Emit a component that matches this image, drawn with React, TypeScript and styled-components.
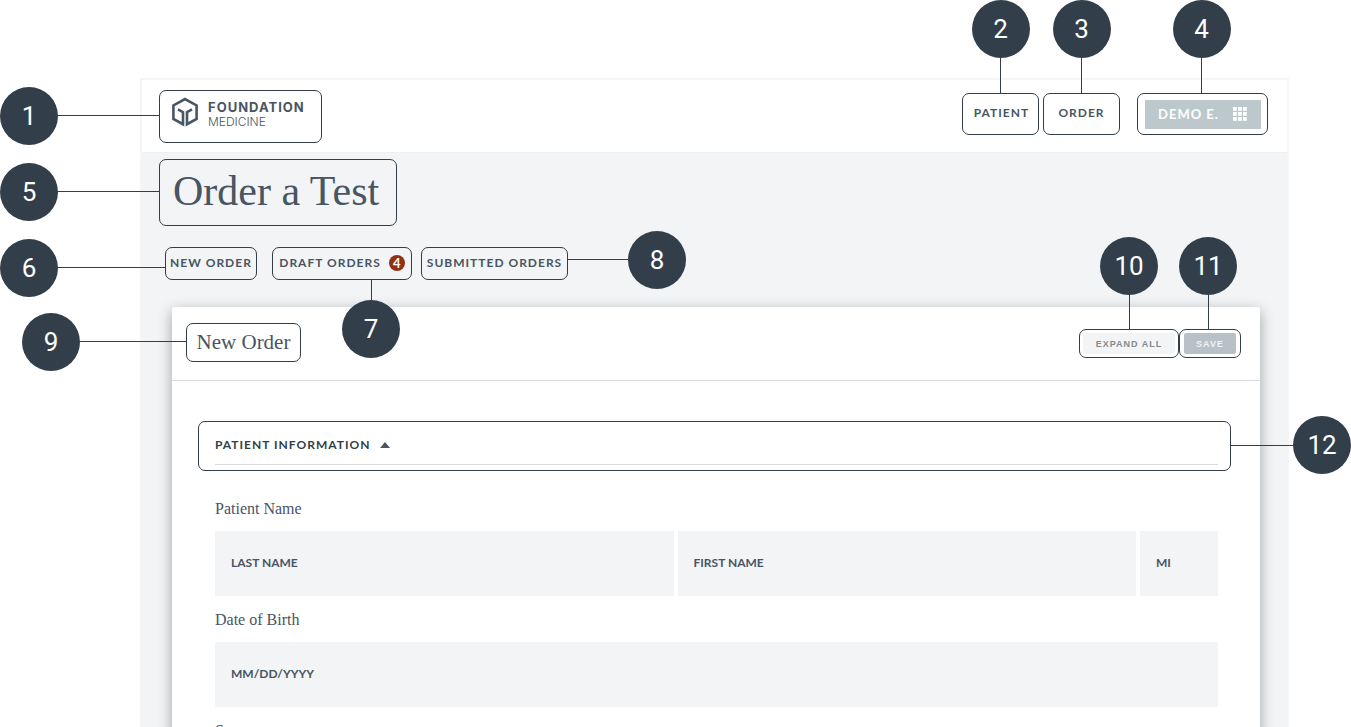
import React from 'react';
import styled, { createGlobalStyle, css } from 'styled-components';

const ink = '#323e4a';
const slate = '#485563';
const mist = '#f2f4f6';
const sans = "Lato, 'Open Sans', sans-serif";
const serif = "'Liberation Serif', serif";

const GlobalStyle = createGlobalStyle`
  *, *::before, *::after { box-sizing: border-box; }
  body { margin: 0; background: #fff; color: ${slate}; font-family: ${sans}; }
  h1, h2, h3 { margin: 0; font-weight: 400; }
  button { border: 0; margin: 0; padding: 0; cursor: pointer; }
  a { color: inherit; text-decoration: none; }
`;

const Page = styled.div`
  display: flex;
  height: 100vh;
  overflow: hidden;
  padding: 78px 62px 0 140px;
`;

const Frame = styled.div`
  flex: 1;
  min-width: 0;
  display: flex;
  flex-direction: column;
  border: 2px solid #f4f5f6;
  border-bottom: 0;
`;

/* Outlined area that carries a numbered marker */
const Outline = styled.div<{ $w?: number; $h: number; $align?: string; $pad?: string }>`
  position: relative;
  flex: none;
  display: flex;
  align-items: center;
  justify-content: ${p => p.$align ?? 'center'};
  width: ${p => (p.$w ? `${p.$w}px` : 'auto')};
  height: ${p => p.$h}px;
  padding: ${p => p.$pad ?? '0'};
  border: 1px solid ${ink};
  border-radius: 7px;
`;

type Side = 'left' | 'right' | 'top' | 'bottom';

const sides = {
  left: css`right: 100%; top: 50%; flex-direction: row;`,
  right: css`left: 100%; top: 50%; flex-direction: row-reverse;`,
  top: css`bottom: 100%; left: 50%; flex-direction: column;`,
  bottom: css`top: 100%; left: 50%; flex-direction: column-reverse;`,
};

const MarkerBox = styled.div<{ $side: Side; $shift: number }>`
  position: absolute;
  z-index: 2;
  display: flex;
  align-items: center;
  ${p => sides[p.$side]}
  ${p => (p.$side === 'left' || p.$side === 'right'
    ? css`margin-top: ${p.$shift - 30}px;`
    : css`margin-left: ${p.$shift - 29}px;`)}
`;

const Disc = styled.span`
  flex: none;
  width: 58px;
  height: 58px;
  border-radius: 50%;
  background: ${ink};
  color: #fff;
  font: 400 26px/58px Roboto, sans-serif;
  text-align: center;
`;

const Lead = styled.span<{ $side: Side; $length: number }>`
  flex: none;
  background: ${ink};
  ${p => (p.$side === 'left' || p.$side === 'right'
    ? css`width: ${p.$length}px; height: 1px;`
    : css`width: 1px; height: ${p.$length}px;`)}
`;

function Marker({ n, side, length, shift = 0 }: { n: number; side: Side; length: number; shift?: number }) {
  return (
    <MarkerBox $side={side} $shift={shift}>
      <Disc>{n}</Disc>
      <Lead $side={side} $length={length} />
    </MarkerBox>
  );
}

const Header = styled.header`
  flex: none;
  display: flex;
  justify-content: space-between;
  align-items: flex-start;
  height: 73px;
  padding: 10px 19px 0 17px;
  background: #fff;
  border-bottom: 1px solid #eeeff0;
`;

const Brand = styled.a`
  display: flex;
  align-items: flex-start;
  gap: 9px;
  padding-bottom: 9px;
`;

const BrandText = styled.span`
  display: flex;
  flex-direction: column;
  padding-top: 3px;
`;

const BrandName = styled.span`
  font: 700 13px/15px Inter, sans-serif;
  letter-spacing: 1px;
`;

const BrandSub = styled.span`
  font: 300 12px/13px Inter, sans-serif;
`;

const Nav = styled.nav`
  display: flex;
  gap: 4px;
  margin-top: 3px;
`;

const Account = styled.div`
  margin-left: 13px;
`;

const TextLink = styled.a`
  font: 700 12px/20px ${sans};
  letter-spacing: 1px;
  white-space: nowrap;
`;

const AccountButton = styled.button`
  display: flex;
  align-items: center;
  justify-content: center;
  gap: 14px;
  width: 116px;
  height: 29px;
  background: #bdc8cd;
  color: #fff;
  font: 700 13px/20px ${sans};
  letter-spacing: 1px;
`;

const Main = styled.main`
  flex: 1;
  display: flex;
  flex-direction: column;
  align-items: flex-start;
  padding: 6px 27px 0 30px;
  background: ${mist};
`;

const TitleRow = styled.div`
  margin-left: -13px;
`;

const Title = styled.h1`
  font: 400 42px/50px ${serif};
`;

const Tabs = styled.nav`
  display: flex;
  margin: 21px 0 27px -7px;
`;

const TabGap = styled.div<{ $before: number }>`
  margin-left: ${p => p.$before}px;
`;

const Count = styled.span`
  width: 16px;
  height: 16px;
  margin-left: 8px;
  border-radius: 50%;
  background: #8f3212;
  color: #fff;
  font: 700 13px/16px ${sans};
  text-align: center;
`;

const Card = styled.section`
  align-self: stretch;
  flex: 1;
  background: #fff;
  border-radius: 2px 2px 0 0;
  box-shadow: 0 4px 14px rgba(40, 46, 44, 0.4);
`;

const CardHeader = styled.div`
  display: flex;
  justify-content: space-between;
  align-items: flex-start;
  height: 74px;
  padding: 16px 19px 0 14px;
  border-bottom: 1px solid #dcdedf;
`;

const CardTitle = styled.h2`
  font: 400 21px/26px ${serif};
`;

const Actions = styled.div`
  display: flex;
  margin-top: 6px;
`;

const SmallButton = styled.button<{ $solid?: boolean }>`
  width: ${p => (p.$solid ? 52 : 92)}px;
  height: 21px;
  border-radius: 2px;
  background: ${p => (p.$solid ? '#b9c1c8' : mist)};
  color: ${p => (p.$solid ? '#f0f2f4' : '#85898d')};
  font: 700 9px/20px 'Liberation Sans', sans-serif;
  letter-spacing: 1px;
`;

const SectionArea = styled.div`
  padding: 40px 29px 0 26px;
`;

const SectionToggle = styled.button`
  align-self: flex-start;
  display: flex;
  flex: 1;
  align-items: center;
  gap: 10px;
  height: 43px;
  padding-top: 3px;
  border-bottom: 1px solid #d9dcde;
  background: none;
  color: ${ink};
  font: 700 12px/20px ${sans};
  letter-spacing: 1px;
`;

const Form = styled.form`
  display: flex;
  flex-direction: column;
  gap: 14px;
  padding: 28px 42px 0 43px;
`;

const Group = styled.div`
  display: flex;
  flex-direction: column;
  gap: 12px;
`;

const Label = styled.label`
  font: 400 16px/20px ${serif};
`;

const NameRow = styled.div`
  display: grid;
  grid-template-columns: 1fr 1fr 78px;
  gap: 4px;
`;

const Field = styled.input`
  width: 100%;
  min-width: 0;
  height: 65px;
  padding: 0 16px 2px;
  border: 0;
  border-radius: 0;
  background: ${mist};
  color: ${slate};
  font: 700 12px/20px ${sans};
  &::placeholder { color: ${slate}; opacity: 1; }
`;

function BrandMark() {
  return (
    <svg width="28" height="31" viewBox="0 0 28 31" fill="none" stroke={slate} strokeWidth="2.6" aria-hidden="true">
      <path d="M7 12.4L12 15.2V27.2L2.4 22V8.4L14 2L25.6 8.4V22L16 27.2V15.2L21 12.4" />
    </svg>
  );
}

function GridIcon() {
  const steps = [0, 5, 10];
  return (
    <svg width="14" height="14" viewBox="0 0 14 14" fill="#fff" aria-hidden="true">
      {steps.map(y => steps.map(x => <rect key={`${x}-${y}`} x={x} y={y} width="3.8" height="3.8" />))}
    </svg>
  );
}

export default function App() {
  return (
    <>
      <GlobalStyle />
      <Page>
        <Frame>
          <Header>
            <Outline $w={163} $h={53} $align="flex-start" $pad="0 0 0 11px">
              <Brand href="#home">
                <BrandMark />
                <BrandText>
                  <BrandName>FOUNDATION</BrandName>
                  <BrandSub>MEDICINE</BrandSub>
                </BrandText>
              </Brand>
              <Marker n={1} side="left" length={102} />
            </Outline>
            <Nav>
              <Outline $w={77} $h={42} $pad="0 0 2px 2px">
                <TextLink href="#patient">PATIENT</TextLink>
                <Marker n={2} side="top" length={36} />
              </Outline>
              <Outline $w={77} $h={42} $pad="0 0 2px">
                <TextLink href="#order">ORDER</TextLink>
                <Marker n={3} side="top" length={36} />
              </Outline>
              <Account>
                <Outline $w={131} $h={42}>
                  <AccountButton type="button">DEMO E.<GridIcon /></AccountButton>
                  <Marker n={4} side="top" length={36} shift={-1} />
                </Outline>
              </Account>
            </Nav>
          </Header>
          <Main>
            <TitleRow>
              <Outline $w={238} $h={67} $align="flex-start" $pad="0 0 3px 13px">
                <Title>Order a Test</Title>
                <Marker n={5} side="left" length={102} />
              </Outline>
            </TitleRow>
            <Tabs>
              <Outline $w={92} $h={33} $pad="0 0 2px">
                <TextLink href="#new">NEW ORDER</TextLink>
                <Marker n={6} side="left" length={108} shift={5} />
              </Outline>
              <TabGap $before={15}>
                <Outline $w={140} $h={33} $pad="0 0 2px">
                  <TextLink href="#drafts">DRAFT ORDERS</TextLink>
                  <Count>4</Count>
                  <Marker n={7} side="bottom" length={21} shift={29} />
                </Outline>
              </TabGap>
              <TabGap $before={9}>
                <Outline $w={147} $h={33} $pad="0 0 2px">
                  <TextLink href="#submitted">SUBMITTED ORDERS</TextLink>
                  <Marker n={8} side="right" length={61} shift={-3} />
                </Outline>
              </TabGap>
            </Tabs>
            <Card>
              <CardHeader>
                <Outline $w={115} $h={39} $pad="0 0 2px">
                  <CardTitle>New Order</CardTitle>
                  <Marker n={9} side="left" length={107} />
                </Outline>
                <Actions>
                  <Outline $w={100} $h={29}>
                    <SmallButton type="button">EXPAND ALL</SmallButton>
                    <Marker n={10} side="top" length={35} />
                  </Outline>
                  <Outline $w={62} $h={29}>
                    <SmallButton type="button" $solid>SAVE</SmallButton>
                    <Marker n={11} side="top" length={35} shift={-2} />
                  </Outline>
                </Actions>
              </CardHeader>
              <SectionArea>
                <Outline $h={50} $align="stretch" $pad="0 12px 0 16px">
                  <SectionToggle type="button" aria-expanded="true">
                    PATIENT INFORMATION
                    <svg width="10" height="6" viewBox="0 0 10 6" fill={slate} aria-hidden="true">
                      <path d="M5 0L10 6H0Z" />
                    </svg>
                  </SectionToggle>
                  <Marker n={12} side="right" length={63} />
                </Outline>
              </SectionArea>
              <Form>
                <Group>
                  <Label htmlFor="last-name">Patient Name</Label>
                  <NameRow>
                    <Field id="last-name" placeholder="LAST NAME" />
                    <Field aria-label="First name" placeholder="FIRST NAME" />
                    <Field aria-label="Middle initial" placeholder="MI" />
                  </NameRow>
                </Group>
                <Group>
                  <Label htmlFor="birth-date">Date of Birth</Label>
                  <Field id="birth-date" placeholder="MM/DD/YYYY" />
                </Group>
                <Group>
                  <Label htmlFor="sex">Sex</Label>
                  <Field id="sex" />
                </Group>
              </Form>
            </Card>
          </Main>
        </Frame>
      </Page>
    </>
  );
}
